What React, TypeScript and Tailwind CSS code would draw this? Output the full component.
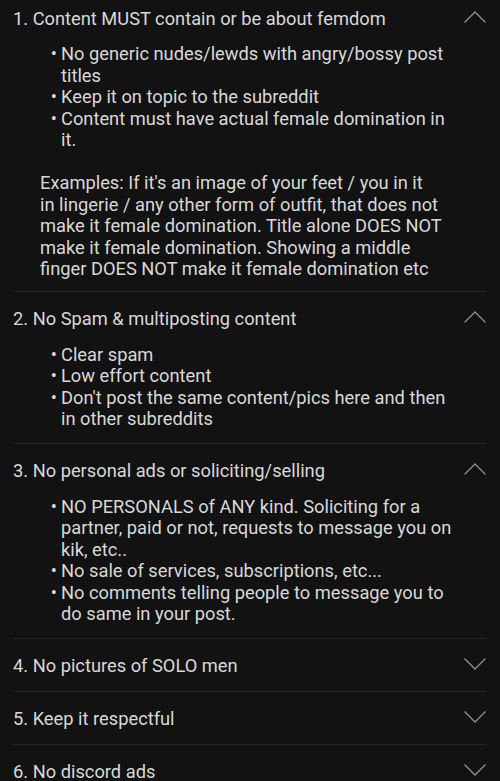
import React from "react";

type Rule = {
  title: string;
  open: boolean;
  bullets?: string[];
  note?: string[];
};

const rules: Rule[] = [
  {
    title: "1. Content MUST contain or be about femdom",
    open: true,
    bullets: [
      "No generic nudes/lewds with angry/bossy post titles",
      "Keep it on topic to the subreddit",
      "Content must have actual female domination in it.",
    ],
    note: [
      "Examples: If it's an image of your feet / you in it",
      "in lingerie / any other form of outfit, that does not",
      "make it female domination. Title alone DOES NOT",
      "make it female domination. Showing a middle",
      "finger DOES NOT make it female domination etc",
    ],
  },
  {
    title: "2. No Spam & multiposting content",
    open: true,
    bullets: [
      "Clear spam",
      "Low effort content",
      "Don't post the same content/pics here and then in other subreddits",
    ],
  },
  {
    title: "3. No personal ads or soliciting/selling",
    open: true,
    bullets: [
      "NO PERSONALS of ANY kind. Soliciting for a partner, paid or not, requests to message you on kik, etc..",
      "No sale of services, subscriptions, etc...",
      "No comments telling people to message you to do same in your post.",
    ],
  },
  { title: "4. No pictures of SOLO men", open: false },
  { title: "5. Keep it respectful", open: false },
  { title: "6. No discord ads", open: false },
];

function Chevron({ up }: { up: boolean }) {
  return (
    <svg width="24" height="14" viewBox="0 0 24 14" className="shrink-0 mb-[4px]">
      <path
        d={up ? "M1.5 12.5 L12 2 L22.5 12.5" : "M1.5 1.5 L12 12 L22.5 1.5"}
        fill="none"
        stroke="#909090"
        strokeWidth="1.3"
      />
    </svg>
  );
}

export default function App() {
  return (
    <div
      className="w-[500px] h-[781px] overflow-hidden bg-[#121212] text-[#d8d8d8] px-[13px]"
      style={{ fontFamily: "Roboto, 'Noto Sans', sans-serif" }}
    >
      <div className="-mt-[9px]">
        {rules.map((r, i) => (
          <div
            key={i}
            className={i < rules.length - 1 ? "border-b border-[#232323]" : ""}
          >
            <div
              className={`flex items-center justify-between pt-[2px] ${
                r.open ? "h-[53px]" : "h-[52px]"
              }`}
            >
              <span className="text-[18.3px] leading-[21.5px]">{r.title}</span>
              <Chevron up={r.open} />
            </div>
            {r.open && (
              <div className="pl-[27px] pr-[31px] pb-[13px] -mt-[1px] text-[18.3px] leading-[21.5px]">
                <ul>
                  {r.bullets?.map((b, j) => (
                    <li key={j} className="flex">
                      <span className="w-[21px] shrink-0 text-right pr-[4px]">•</span>
                      <span>{b}</span>
                    </li>
                  ))}
                </ul>
                {r.note && (
                  <p className="mt-[21.5px] -mb-[2px] whitespace-nowrap">
                    {r.note.map((line, k) => (
                      <React.Fragment key={k}>
                        {line}
                        {k < r.note!.length - 1 && <br />}
                      </React.Fragment>
                    ))}
                  </p>
                )}
              </div>
            )}
          </div>
        ))}
      </div>
    </div>
  );
}
